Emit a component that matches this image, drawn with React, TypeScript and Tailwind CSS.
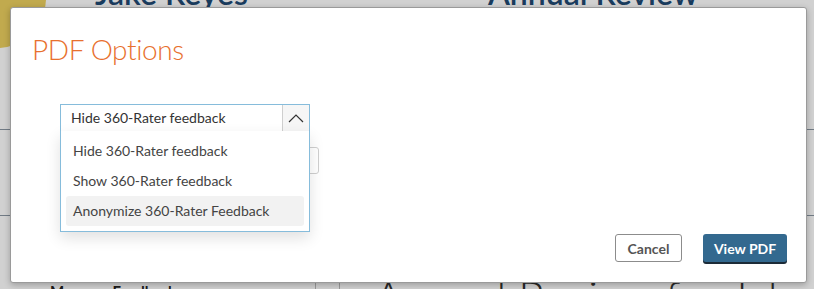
import { useState } from 'react'

const options = ['Hide 360-Rater feedback', 'Show 360-Rater feedback', 'Anonymize 360-Rater Feedback']

function ChevronUp() {
  return (
    <svg width="16" height="10" viewBox="0 0 16 10" fill="none" aria-hidden="true">
      <path d="M1 9 L8 2 L15 9" stroke="#333" strokeWidth="1.2" />
    </svg>
  )
}

export default function App() {
  const [active] = useState(2)

  return (
    <div className="relative w-[814px] h-[289px] overflow-hidden bg-white font-['Lato',sans-serif]">
      {/* Page behind the modal */}
      <div className="h-full flex flex-col">
        <div className="h-[130px] shrink-0 border-b border-[#8a96a3] relative">
          <div className="absolute -left-[52px] -top-[50px] w-[98px] h-[98px] rounded-full bg-[#ecd060]" />
          <div className="flex items-start -mt-[23px]">
            <span className="ml-[95px] shrink-0 text-[32px] font-semibold text-[#1f4a73] leading-none">Jake Reyes</span>
            <span className="ml-[240px] shrink-0 text-[32px] font-semibold text-[#1f4a73] leading-none">Annual Review</span>
          </div>
        </div>
        <div className="h-[86px] shrink-0 border-b border-[#8a96a3]" />
        <div className="flex-1 flex">
          <div className="w-[316px] shrink-0 border-r border-[#bbb] pt-[63px] pl-[50px]">
            <span className="text-[15px] font-bold text-[#222] leading-none">Manager Feedback</span>
          </div>
          <div className="w-[24px] shrink-0 border-r border-[#bbb]" />
          <div className="shrink-0 pt-[58px] pl-[34px] text-[44px] font-light text-[#333] whitespace-nowrap leading-none">
            Annual Review for Jake Reyes
          </div>
        </div>
      </div>

      {/* Overlay */}
      <div className="absolute inset-0 bg-black/[0.18]" />

      {/* Modal */}
      <div className="absolute left-[10px] top-[7px] w-[797px] h-[276px] bg-white rounded-[3px] border border-[#9a9a9a] shadow-[0_2px_6px_rgba(0,0,0,0.25)] flex flex-col">
        <h2 className="pl-[21px] pt-[27px] text-[28px] font-light text-[#e8702e] leading-none tracking-[-0.4px]">
          PDF Options
        </h2>

        <div className="pl-[49px] pt-[41px] flex flex-col gap-[15px]">
          <div className="relative w-[250px]">
            <div className="h-[28px] flex border border-[#86bcdb] border-b-[#d0d0d0] bg-white">
              <span className="flex-1 pl-[10px] text-[14px] text-[#333] leading-[26px]">{options[0]}</span>
              <span className="w-[27px] flex items-center justify-center border-l border-[#cfcfcf] bg-[#f6f6f6]">
                <ChevronUp />
              </span>
            </div>
            <ul className="absolute left-0 right-0 top-[27px] z-10 bg-white border border-[#86bcdb] border-t-0 p-[5px] shadow-[0_6px_14px_rgba(0,0,0,0.12)]">
              {options.map((o, i) => (
                <li
                  key={o}
                  className={`h-[30px] pl-[7px] text-[14px] text-[#444] leading-[30px] rounded-[3px] ${i === active ? 'bg-[#f2f2f2]' : ''}`}
                >
                  {o}
                </li>
              ))}
            </ul>
          </div>
          <div className="w-[259px] h-[27px] border border-[#cfcfcf] rounded-[3px]" />
        </div>

        <div className="mt-auto flex justify-end gap-[21px] pr-[19px] pb-[20px]">
          <button className="w-[67px] h-[28px] rounded-[3px] border border-[#8c8c8c] bg-white text-[14px] font-bold text-[#555]">
            Cancel
          </button>
          <button className="w-[84px] h-[28px] rounded-[3px] bg-[#33698f] shadow-[0_2px_0_#1c2b38] text-[14px] font-bold text-white">
            View PDF
          </button>
        </div>
      </div>
    </div>
  )
}
